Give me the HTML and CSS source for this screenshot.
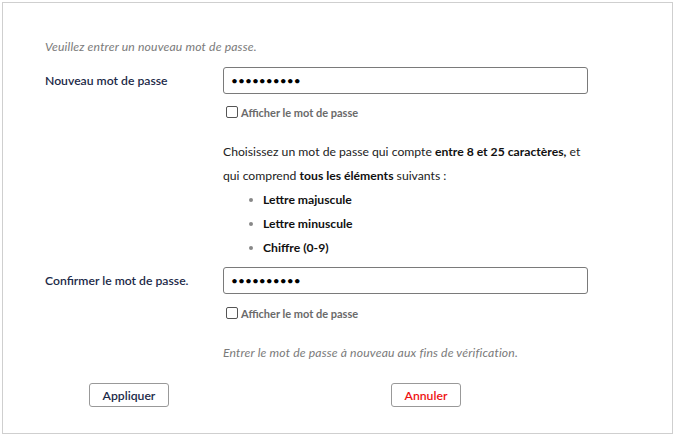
FILE: index.html
```html
<!DOCTYPE html>
<html lang="fr">
<head>
<meta charset="utf-8">
<title>Mot de passe</title>
<link rel="stylesheet" href="styles.css">
</head>
<body>
<div class="panel">
  <p class="intro">Veuillez entrer un nouveau mot de passe.</p>

  <div class="row row-first">
    <label class="label" for="pw1">Nouveau mot de passe</label>
    <input class="field" id="pw1" type="password" value="abcdefghij">
  </div>
  <div class="row">
    <span></span>
    <label class="show"><span class="box"></span>Afficher le mot de passe</label>
  </div>

  <div class="row">
    <span></span>
    <div class="rules">
      <p>Choisissez un mot de passe qui compte <b>entre 8 et 25 caractères,</b> et<br>qui comprend <b>tous les éléments</b> suivants :</p>
      <ul>
        <li>Lettre majuscule</li>
        <li>Lettre minuscule</li>
        <li>Chiffre (0-9)</li>
      </ul>
    </div>
  </div>

  <div class="row row-confirm">
    <label class="label" for="pw2">Confirmer le mot de passe.</label>
    <input class="field" id="pw2" type="password" value="abcdefghij">
  </div>
  <div class="row">
    <span></span>
    <label class="show show-2"><span class="box"></span>Afficher le mot de passe</label>
  </div>
  <div class="row">
    <span></span>
    <p class="note">Entrer le mot de passe à nouveau aux fins de vérification.</p>
  </div>

  <div class="actions">
    <button class="btn btn-apply" type="button">Appliquer</button>
    <button class="btn btn-cancel" type="button">Annuler</button>
  </div>
</div>
</body>
</html>
```
FILE: styles.css
```css
* { box-sizing: border-box; }
html, body { margin: 0; padding: 0; background: #fff; }
body {
  font-family: Lato, "Open Sans", sans-serif;
  font-size: 12.2px;
  color: #222;
}
.panel {
  margin: 2px;
  width: 671px;
  height: 432px;
  border: 1px solid #cfcfcf;
  padding: 34px 0 0 42px;
}
.intro {
  margin: 0;
  line-height: 20px;
  font-style: italic;
  color: #7a7a7a;
  letter-spacing: 0.15px;
}
.row {
  display: grid;
  grid-template-columns: 178px 365px;
  align-items: center;
}
.row-first { margin-top: 10px; }
.label {
  color: #1c2a48;
  font-weight: 600;
}
.field {
  height: 27px;
  width: 365px;
  border: 1px solid #7a7a7a;
  border-radius: 3px;
  padding: 0 7px;
  font-size: 12px;
  font-family: Lato, sans-serif;
  color: #000;
}
.show {
  display: flex;
  align-items: center;
  height: 20px;
  margin-top: 8px;
  margin-left: 3px;
  color: #6a6a6a;
  font-weight: 700;
  font-size: 11px;
}
.show-2 { margin-top: 9px; }
.box {
  width: 12px;
  height: 12px;
  border: 1px solid #555;
  border-radius: 2px;
  margin-right: 3px;
}
.rules {
  margin-top: 18px;
  line-height: 24px;
  color: #222;
}
.rules p { margin: 0; }
.rules b { color: #111; font-weight: 700; }
.rules ul {
  margin: 0;
  padding-left: 41px;
  font-weight: 700;
  color: #111;
  list-style: none;
}
.rules li {
  display: flex;
  align-items: center;
}
.rules li::before {
  content: "";
  width: 4px;
  height: 4px;
  border-radius: 50%;
  background: #888;
  margin: 0 10px 0 -15px;
}
.row-confirm { margin-top: 7px; }
.note {
  margin: 20px 0 0;
  line-height: 20px;
  font-style: italic;
  color: #7a7a7a;
  letter-spacing: 0.15px;
}
.actions {
  display: flex;
  gap: 222px;
  margin: 20px 0 0 44px;
}
.btn {
  height: 24px;
  padding: 0 10px;
  background: #fff;
  border: 1px solid #999;
  border-radius: 3px;
  font-family: Lato, sans-serif;
  font-size: 12.2px;
  font-weight: 600;
}
.btn-apply { width: 80px; color: #1c2a48; }
.btn-cancel { width: 70px; color: #ee1111; }
```
